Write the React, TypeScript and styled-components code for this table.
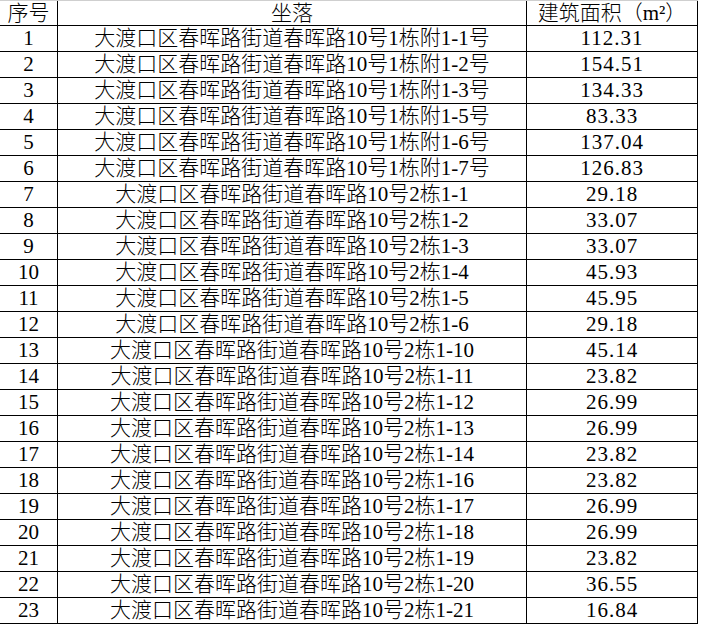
import React from 'react';
import styled, { createGlobalStyle } from 'styled-components';

const GlobalStyle = createGlobalStyle`
  html, body {
    margin: 0;
    padding: 0;
    background: #fff;
  }
  body {
    font-family: 'Liberation Serif', 'Noto Sans CJK SC', serif;
    color: #000;
  }
`;

interface Row {
  no: number;
  place: string;
  area: string;
}

const rows: Row[] = [
  { no: 1, place: '大渡口区春晖路街道春晖路10号1栋附1-1号', area: '112.31' },
  { no: 2, place: '大渡口区春晖路街道春晖路10号1栋附1-2号', area: '154.51' },
  { no: 3, place: '大渡口区春晖路街道春晖路10号1栋附1-3号', area: '134.33' },
  { no: 4, place: '大渡口区春晖路街道春晖路10号1栋附1-5号', area: '83.33' },
  { no: 5, place: '大渡口区春晖路街道春晖路10号1栋附1-6号', area: '137.04' },
  { no: 6, place: '大渡口区春晖路街道春晖路10号1栋附1-7号', area: '126.83' },
  { no: 7, place: '大渡口区春晖路街道春晖路10号2栋1-1', area: '29.18' },
  { no: 8, place: '大渡口区春晖路街道春晖路10号2栋1-2', area: '33.07' },
  { no: 9, place: '大渡口区春晖路街道春晖路10号2栋1-3', area: '33.07' },
  { no: 10, place: '大渡口区春晖路街道春晖路10号2栋1-4', area: '45.93' },
  { no: 11, place: '大渡口区春晖路街道春晖路10号2栋1-5', area: '45.95' },
  { no: 12, place: '大渡口区春晖路街道春晖路10号2栋1-6', area: '29.18' },
  { no: 13, place: '大渡口区春晖路街道春晖路10号2栋1-10', area: '45.14' },
  { no: 14, place: '大渡口区春晖路街道春晖路10号2栋1-11', area: '23.82' },
  { no: 15, place: '大渡口区春晖路街道春晖路10号2栋1-12', area: '26.99' },
  { no: 16, place: '大渡口区春晖路街道春晖路10号2栋1-13', area: '26.99' },
  { no: 17, place: '大渡口区春晖路街道春晖路10号2栋1-14', area: '23.82' },
  { no: 18, place: '大渡口区春晖路街道春晖路10号2栋1-16', area: '23.82' },
  { no: 19, place: '大渡口区春晖路街道春晖路10号2栋1-17', area: '26.99' },
  { no: 20, place: '大渡口区春晖路街道春晖路10号2栋1-18', area: '26.99' },
  { no: 21, place: '大渡口区春晖路街道春晖路10号2栋1-19', area: '23.82' },
  { no: 22, place: '大渡口区春晖路街道春晖路10号2栋1-20', area: '36.55' },
  { no: 23, place: '大渡口区春晖路街道春晖路10号2栋1-21', area: '16.84' },
];

const Sheet = styled.div`
  display: grid;
  grid-template-columns: 58px 469px 171px;
  width: 698px;
  border-top: 1px solid #cfcfcf;
`;

const Cell = styled.div<{ $spaced?: boolean }>`
  box-sizing: border-box;
  height: 26px;
  display: flex;
  align-items: center;
  justify-content: center;
  border-right: 1px solid #000;
  border-bottom: 1px solid #000;
  font-size: 21px;
  font-weight: 300;
  line-height: 1;
  white-space: nowrap;
  overflow: hidden;
  letter-spacing: ${p => (p.$spaced ? '1px' : '0')};
`;

const HeadCell = styled(Cell)`
  height: 25px;
`;

const App: React.FC = () => {
  return (
    <>
      <GlobalStyle />
      <Sheet>
        <HeadCell>序号</HeadCell>
        <HeadCell>坐落</HeadCell>
        <HeadCell>建筑面积（m²）</HeadCell>
        {rows.map(r => (
          <React.Fragment key={r.no}>
            <Cell>{r.no}</Cell>
            <Cell>{r.place}</Cell>
            <Cell $spaced>{r.area}</Cell>
          </React.Fragment>
        ))}
      </Sheet>
    </>
  );
};

export default App;
